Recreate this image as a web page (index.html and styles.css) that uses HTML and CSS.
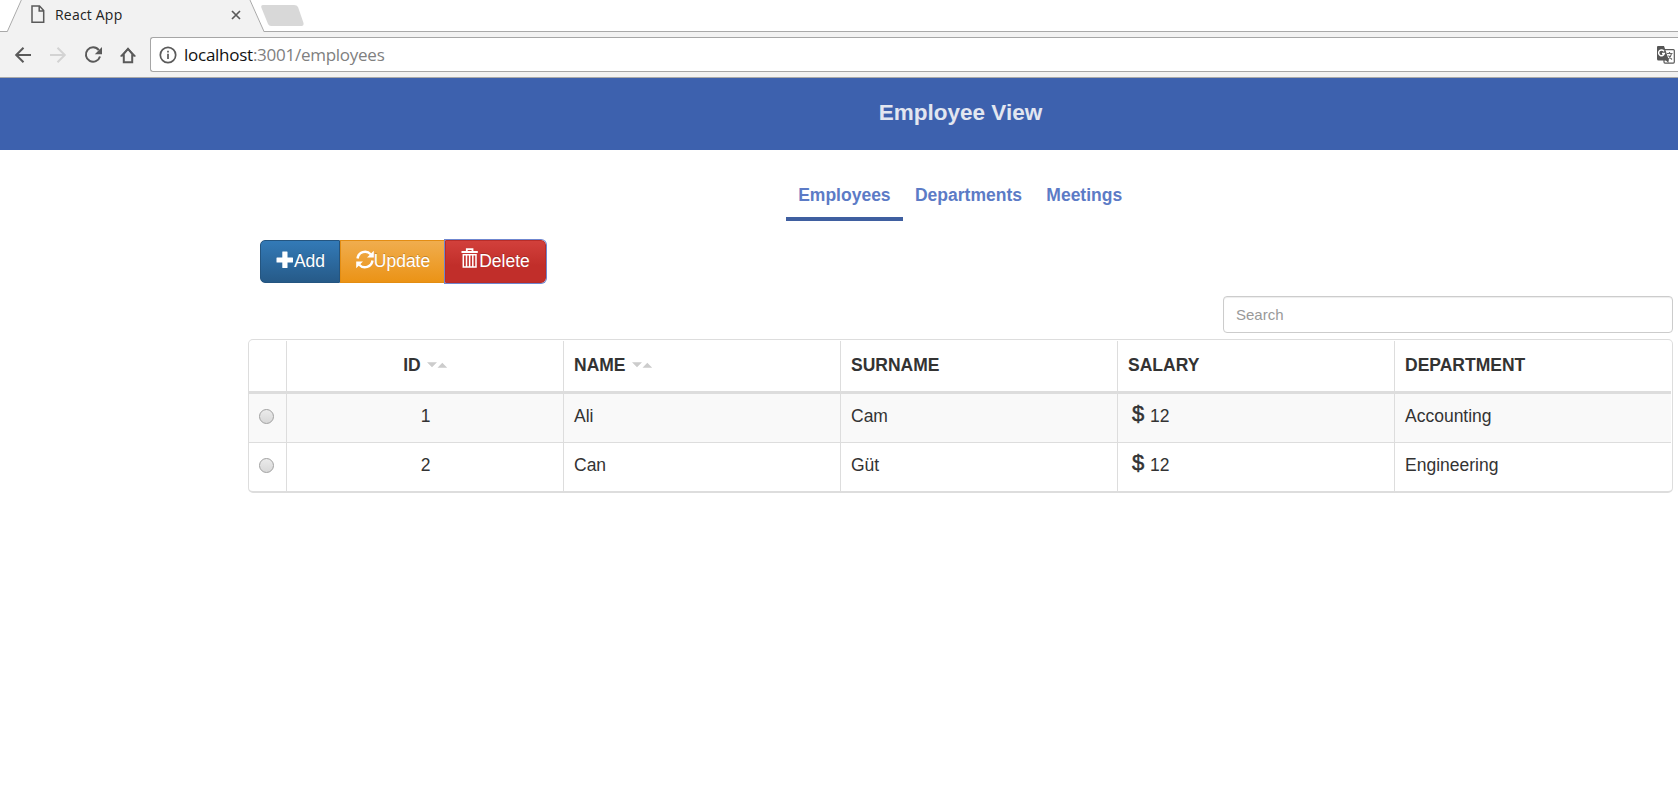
FILE: index.html
```html
<!DOCTYPE html>
<html lang="en">
<head>
<meta charset="utf-8">
<title>React App</title>
<link rel="stylesheet" href="styles.css">
</head>
<body>
<div class="tabstrip">
  <div class="tab">
    <svg class="tab-shape" width="310" height="32" viewBox="0 0 310 32">
      <path d="M7 32L22 0H249.500L264 32Z" fill="#f2f2f2"/>
      <path d="M0 31.500H7.300L21.800 -1M249.500 -1L264 31.500H310" fill="none" stroke="#a9a9a9"/>
      <path d="M263 5H294Q297 5 298 7L303.500 23Q304 26 301.500 26H271Q269 26 268 24L261.500 8Q260.500 5 263 5Z" fill="#d8d8d8"/>
    </svg>
    <svg class="page-icon" width="14" height="19" viewBox="0 0 14 19"><path d="M1 1H8.500L12.700 5.500V17.300H1ZM8.200 1V6H12.700" fill="none" stroke="#5a5a5a" stroke-width="1.500"/></svg>
    <span class="tab-title">React App</span>
    <svg class="tab-close" width="10" height="10" viewBox="0 0 10 10"><path d="M1 1L9 9M9 1L1 9" stroke="#5a5a5a" stroke-width="1.700"/></svg>
  </div>
</div>
<div class="toolbar">
  <svg class="nav-icons" width="140" height="20" viewBox="0 0 140 20" fill="none" stroke="#5a5a5a" stroke-width="2">
    <path d="M31 10H16.500M23.500 2.700L16.200 10L23.500 17.300"/>
    <path d="M50 10H64.500M57.500 2.700L64.800 10L57.500 17.300" stroke="#d3d3d3"/>
    <path d="M98.800 5.100A7.200 7.200 0 1 0 100 11.500"/>
    <path d="M102 2V9.200H94.800Z" fill="#5a5a5a" stroke="none"/>
    <path d="M122.300 10.600H123.800V17.200H132.200V10.600H133.700L128 3.900Z"/>
    <path d="M120.800 11.300L128 3.900L135.200 11.300" stroke-width="1.400"/>
  </svg>
  <div class="address">
    <svg class="info" width="18" height="18" viewBox="0 0 18 18"><circle cx="9" cy="9" r="7.700" fill="none" stroke="#5a5a5a" stroke-width="1.700"/><path d="M9 7.800V13M9 4.800V6.500" stroke="#5a5a5a" stroke-width="1.700"/></svg>
    <span class="url"><span class="host">localhost</span>:3001/employees</span>
    <svg class="translate" width="18" height="18" viewBox="0 0 18 18"><rect x="7" y="3.600" width="10.300" height="13.500" rx="1" fill="#fff" stroke="#5a5a5a" stroke-width="1.200"/><path d="M1 0H7L12 14.500H1.500Q0 14.500 0 13V1Q0 0 1 0Z" fill="#555"/><path d="M8.500 14L11.500 17V13Z" fill="#555"/><path d="M7 5.300A2.900 2.900 0 1 0 7.300 7.600H5" fill="none" stroke="#fff" stroke-width="1.500"/><path d="M10 7.500H15.500M12.500 6V7.500M14.500 7.500Q14 11 11 13M11.500 9.500Q13 12 15 13.500" fill="none" stroke="#666" stroke-width="1.200"/></svg>
  </div>
</div>
<header class="header"><h1>Employee View</h1></header>
<nav class="nav">
  <a class="nav-link active">Employees</a>
  <a class="nav-link">Departments</a>
  <a class="nav-link">Meetings</a>
</nav>
<main class="content">
  <div class="buttons">
    <button class="btn btn-add"><svg width="18" height="19" viewBox="0 0 18 19"><path d="M6.500 1.500H11Q11.500 1.500 11.500 2V7.500H16.500Q17 7.500 17 8V12Q17 12.500 16.500 12.500H11.500V17.500Q11.500 18 11 18H7Q6.300 18 6.300 17.500V12.500H1Q.500 12.500 .500 12V8Q.500 7.500 1 7.500H6.300V2Z" fill="#fff"/></svg>Add</button>
    <button class="btn btn-update"><svg width="18" height="19" viewBox="0 0 18 19"><path d="M1.500 8.500A7.600 7.600 0 0 1 14.700 4.300M16.500 10.500A7.600 7.600 0 0 1 3.300 14.700" fill="none" stroke="#fff" stroke-width="2.400"/><path d="M17.800 .800V7.500H11ZM.200 18.200V11.500H7Z" fill="#fff"/></svg>Update</button>
    <button class="btn btn-delete"><svg width="18" height="21" viewBox="0 0 18 21"><path d="M5.800 3V1.200H11.500V3M.500 4H16.800" fill="none" stroke="#fff" stroke-width="1.800"/><path d="M2.300 6.800H15V19H2.300ZM5.500 7V19M8.650 7V19M11.800 7V19" fill="none" stroke="#fff" stroke-width="1.500"/></svg>Delete</button>
  </div>
  <input class="search" type="text" placeholder="Search">
  <div class="table">
    <div class="row head">
      <div class="cell"></div>
      <div class="cell center">ID<svg class="sort" width="21" height="6" viewBox="0 0 21 6"><path d="M0 .300H10L5 5.300ZM10.500 5.700L15.300 .700L20.200 5.700Z" fill="#ccc"/></svg></div>
      <div class="cell">NAME<svg class="sort" width="21" height="6" viewBox="0 0 21 6"><path d="M0 .300H10L5 5.300ZM10.500 5.700L15.300 .700L20.200 5.700Z" fill="#ccc"/></svg></div>
      <div class="cell">SURNAME</div>
      <div class="cell">SALARY</div>
      <div class="cell">DEPARTMENT</div>
    </div>
    <div class="row striped">
      <div class="cell pick"><span class="radio"></span></div>
      <div class="cell center">1</div>
      <div class="cell">Ali</div>
      <div class="cell">Cam</div>
      <div class="cell"><span class="usd">$</span>12</div>
      <div class="cell">Accounting</div>
    </div>
    <div class="row last">
      <div class="cell pick"><span class="radio"></span></div>
      <div class="cell center">2</div>
      <div class="cell">Can</div>
      <div class="cell">Güt</div>
      <div class="cell"><span class="usd">$</span>12</div>
      <div class="cell">Engineering</div>
    </div>
  </div>
</main>
</body>
</html>
```
FILE: styles.css
```css
* { box-sizing: border-box; }
body {
  margin: 0;
  height: 807px;
  overflow: hidden;
  background: #fff;
  color: #333;
  font: 17.5px/25px "Liberation Sans", Arial, sans-serif;
}
svg { flex: none; }

/* Browser chrome */
.tabstrip { height: 32px; border-bottom: 1px solid #a9a9a9; }
.tab { position: relative; height: 32px; width: 310px; display: flex; align-items: flex-start; padding-left: 31px; }
.tab-shape { position: absolute; left: 0; top: 0; }
.page-icon { position: relative; margin-top: 5px; }
.tab-title {
  position: relative;
  width: 176px;
  margin-left: 10px;
  padding-top: 5px;
  font: 14px/20px "Open Sans", "Noto Sans", sans-serif;
  letter-spacing: .2px;
  color: #222;
}
.tab-close { position: relative; margin-top: 10px; }
.toolbar { height: 46px; display: flex; padding-top: 5px; background: #f2f2f2; border-bottom: 1px solid #a9a9a9; }
.nav-icons { margin-top: 8px; }
.address {
  flex: 1;
  height: 35px;
  margin-left: 10px;
  display: flex;
  align-items: center;
  padding: 0 3px 0 8px;
  border: 1px solid #a6a6a6;
  border-right: 0;
  border-radius: 3px 0 0 3px;
  background: #fff;
}
.url { flex: 1; margin-left: 7px; font: 17px/24px "Open Sans", "Noto Sans", sans-serif; letter-spacing: -.26px; color: #808080; }
.host { color: #111; }

/* Page header and navigation */
.header { height: 72px; padding: 22px 0 0 243px; background: #3d61ae; text-align: center; }
.header h1 { margin: 0; font-size: 22.5px; line-height: 25px; color: #e2e6f0; }
.nav { display: flex; height: 90px; padding: 32px 0 0 786px; }
.nav-link { height: 39px; padding: 0 12.200px; font-weight: bold; line-height: 26px; color: #5c7bc6; }
.nav-link.active { border-bottom: 4px solid #3f5fa0; }

/* Employees panel */
.content { display: flex; flex-direction: column; padding: 0 5px 0 248px; }
.buttons { display: flex; height: 43px; margin-left: 12px; }
.btn {
  display: flex;
  align-items: center;
  justify-content: center;
  height: 43px;
  padding: 0 0 0 1px;
  border: 1px solid;
  font: inherit;
  color: #fff;
  text-shadow: 0 -1px 0 rgba(0,0,0,.2);
}
.btn svg { margin-top: -4px; }
.btn-add { width: 80px; border-color: #245580; border-radius: 5px 0 0 5px; background: linear-gradient(#337ab7, #265a88); }
.btn-update { width: 105px; border-color: #e38d13; background: linear-gradient(#f0ad4e, #eb9316); }
.btn-delete {
  width: 101px;
  border-color: #b92c28;
  border-radius: 0 5px 5px 0;
  background: linear-gradient(#d2403b, #c12e2a 60%);
  box-shadow: 0 0 0 1px #6f86cf;
}
.btn.btn-delete { padding-left: 0; }
.btn.btn-delete svg { margin-top: -7px; }
.search {
  align-self: flex-end;
  width: 450px;
  height: 37px;
  margin-top: 13px;
  padding: 0 12px;
  border: 1px solid #ccc;
  border-radius: 4px;
  box-shadow: inset 0 1px 1px rgba(0,0,0,.075);
  font: 15px "Liberation Sans", Arial, sans-serif;
  color: #555;
}
.search::placeholder { color: #999; opacity: 1; }
.table { margin-top: 6px; border: 1px solid #ddd; border-bottom-width: 2px; border-radius: 5px; overflow: hidden; }
.row { display: grid; grid-template-columns: 37px repeat(4, 277px) 1fr; height: 49px; border-bottom: 1px solid #ddd; margin-right: 1px; }
.head { height: 54px; padding-top: 1px; border-bottom-width: 3px; font-weight: bold; }
.striped { background: #f9f9f9; }
.last { height: 48px; border-bottom: 0; }
.cell { padding: 10px 9px 0 10px; border-left: 1px solid #ddd; white-space: nowrap; }
.cell:first-child { border-left: 0; }
.head .cell { padding-top: 12px; }
.center { text-align: center; }
.sort { margin-left: 6px; vertical-align: 3px; }
.cell.pick { padding: 15px 0 0 10px; }
.radio {
  display: block;
  width: 15px;
  height: 15px;
  border: 1px solid #a0a0a0;
  border-radius: 50%;
  background: linear-gradient(#ebebeb, #d8d8d8);
}
.usd { display: inline-block; width: 22px; padding-left: 4px; font-size: 22px; line-height: 20px; vertical-align: 1px; -webkit-text-stroke: .5px #333; }
```
